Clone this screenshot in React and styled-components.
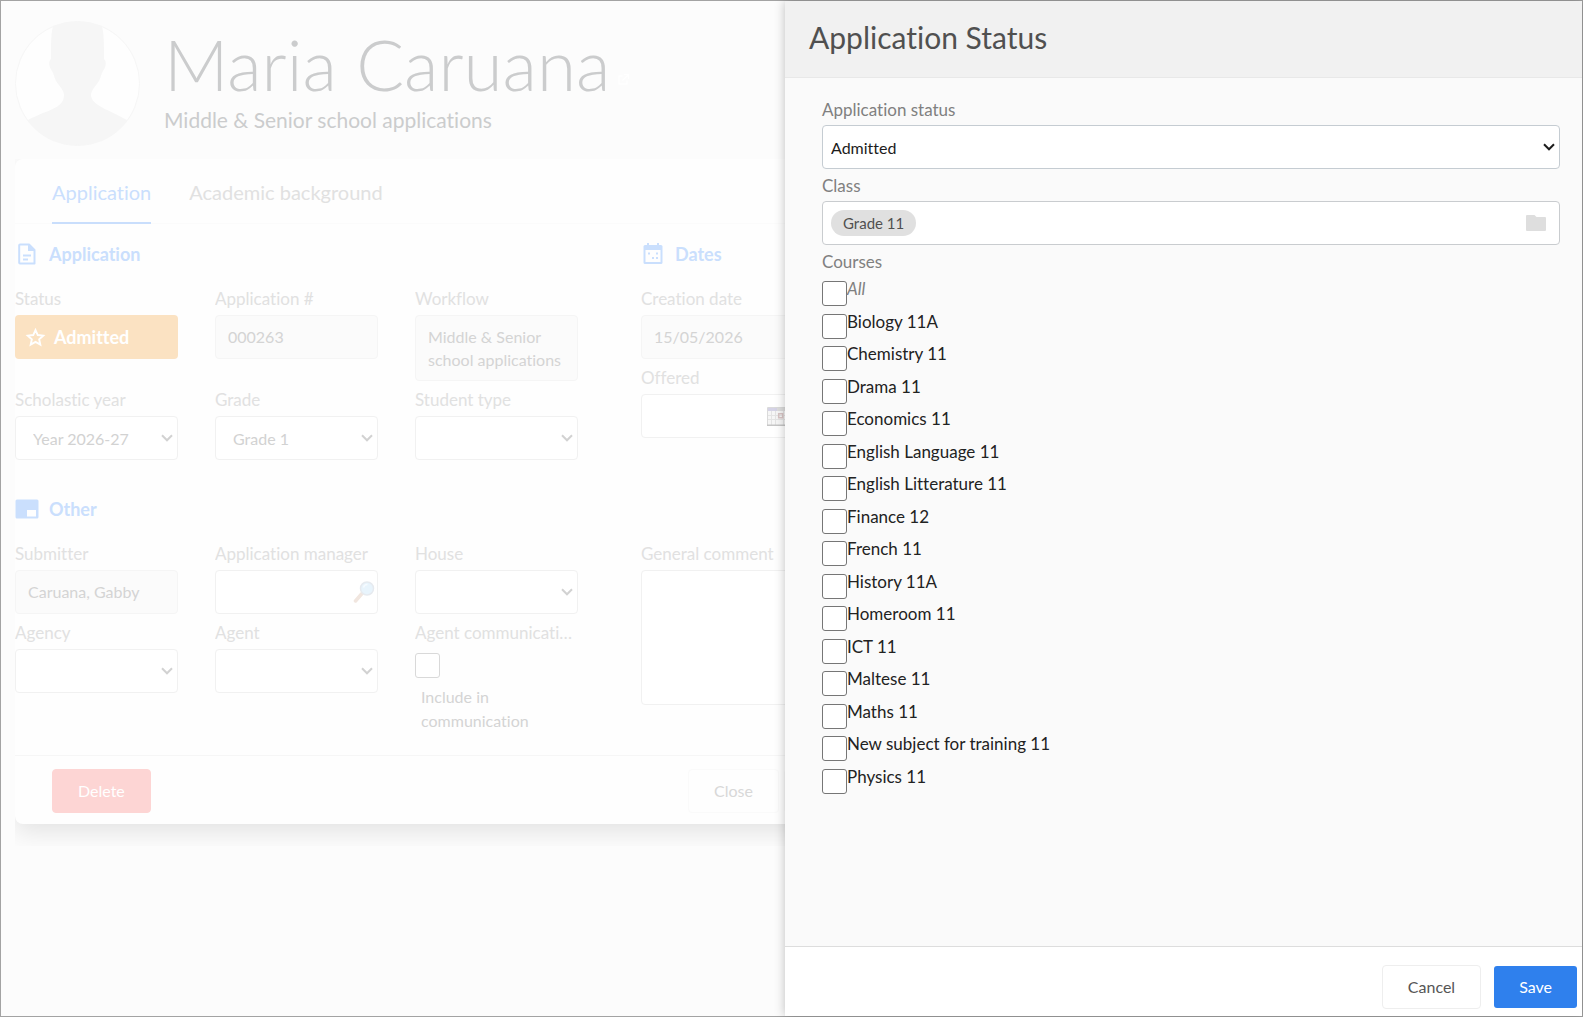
import React from 'react';
import styled, { createGlobalStyle } from 'styled-components';

const GlobalStyle = createGlobalStyle`
  * {
    box-sizing: border-box;
  }
  body {
    margin: 0;
    font-family: Lato, 'Open Sans', sans-serif;
    font-size: 16px;
    font-variant-ligatures: none;
    background: #fcfcfc;
  }
  button,
  input,
  select,
  textarea {
    font-family: inherit;
    font-size: 16px;
    font-variant-ligatures: none;
    margin: 0;
  }
`;

const Shell = styled.div`
  display: grid;
  grid-template-columns: minmax(0, 784fr) minmax(0, 797fr);
  min-height: 100vh;
  border: 1px solid #a3a3a3;
`;

const Record = styled.main`
  overflow: hidden;
  padding: 20px 0 0 14px;
  background: #fcfcfc;
`;

const Profile = styled.header`
  display: flex;
  gap: 24px;
  height: 138px;
`;

const Avatar = styled.svg`
  flex: none;
  width: 125px;
  height: 125px;
`;

const Name = styled.h1`
  display: flex;
  align-items: center;
  gap: 8px;
  margin: 0;
  font-size: 71px;
  font-weight: 300;
  line-height: 85px;
  color: #cbcccd;
  svg {
    margin-top: 32px;
    color: #ffffff;
  }
`;

const Workflow = styled.p`
  margin: 0;
  font-size: 21px;
  line-height: 28px;
  color: #cbcccd;
`;

const Card = styled.section`
  margin-right: -84px;
  border-radius: 8px;
  background: #fefefe;
  box-shadow: 0 8px 24px rgba(0, 0, 0, 0.1);
  clip-path: inset(0 0 -22px 0);
`;

const TabList = styled.nav`
  display: flex;
  gap: 38px;
  height: 65px;
  padding-left: 37px;
  border-bottom: 1px solid #fbfbfb;
`;

const Tab = styled.a`
  height: 65px;
  padding-top: 20px;
  border-bottom: 2px solid ${({ $active }) => ($active ? '#c9defc' : 'transparent')};
  font-size: 20px;
  line-height: 26px;
  text-decoration: none;
  color: ${({ $active }) => ($active ? '#cadffd' : '#e1e1e1')};
`;

const Sections = styled.form`
  display: grid;
  grid-template-columns: minmax(0, 563fr) minmax(0, 228fr);
  gap: 19px 63px;
  padding-bottom: 22px;
`;

const SectionTitle = styled.h2`
  display: flex;
  align-items: center;
  gap: 10px;
  margin: 0;
  padding: 17px 0 13px;
  font-size: 18px;
  font-weight: 700;
  line-height: 26px;
  color: #cadffd;
`;

const Fields = styled.div`
  display: grid;
  grid-template-columns: repeat(${({ $columns }) => $columns}, minmax(0, 1fr));
  column-gap: 37px;
  padding-right: ${({ $inset }) => ($inset ? '65px' : '0')};
`;

const FieldBox = styled.div`
  min-width: 0;
`;

const Label = styled.label`
  display: block;
  overflow: hidden;
  padding: 6px 0 3px;
  font-size: 17px;
  line-height: 26px;
  white-space: nowrap;
  text-overflow: ellipsis;
  color: #e1e1e1;
`;

const ReadOnly = styled.output`
  display: block;
  min-height: 44px;
  padding: 9px 12px;
  border: 1px solid #f5f5f5;
  border-radius: 4px;
  line-height: 23px;
  background: #fbfbfb;
  color: #d4d4d4;
`;

const StatusBadge = styled.output`
  display: flex;
  align-items: center;
  gap: 8px;
  height: 44px;
  padding: 0 10px;
  border-radius: 4px;
  font-size: 18px;
  font-weight: 700;
  background: #fbe2c2;
  color: #ffffff;
`;

const SelectBox = styled.div`
  display: grid;
  align-items: center;
  color: ${({ $strong }) => ($strong ? '#1c1c1c' : '#d2d2d2')};
  > * {
    grid-area: 1 / 1;
  }
  svg {
    justify-self: end;
    margin-right: 5px;
    pointer-events: none;
  }
`;

const Select = styled.select`
  appearance: none;
  width: 100%;
  height: 44px;
  padding: 0 20px 0 ${({ $strong }) => ($strong ? '8px' : '17px')};
  border: 1px solid ${({ $strong }) => ($strong ? '#c5ccd2' : '#f1f1f1')};
  border-radius: 4px;
  background: #ffffff;
  color: inherit;
`;

const InputWrap = styled.div`
  display: flex;
  align-items: center;
  height: 44px;
  padding-right: ${({ $pad }) => $pad}px;
  border: 1px solid #f1f1f1;
  border-radius: 4px;
  background: #ffffff;
  svg {
    flex: none;
  }
`;

const Input = styled.input`
  flex: 1;
  min-width: 0;
  height: 100%;
  padding: 0 12px;
  border: 0;
  background: transparent;
  color: #d4d4d4;
`;

const Textarea = styled.textarea`
  display: block;
  width: 100%;
  height: 135px;
  border: 1px solid #f1f1f1;
  border-radius: 4px;
  background: #ffffff;
  resize: none;
`;

const Checkbox = styled.input`
  flex: none;
  appearance: none;
  display: block;
  width: 25px;
  height: 25px;
  border: 1px solid ${({ $faded }) => ($faded ? '#d9d9d9' : '#767676')};
  border-radius: 3px;
  background: #ffffff;
`;

const Include = styled.label`
  display: block;
  padding-top: 4px;
  color: #d4d4d4;
  line-height: 24px;
  span {
    display: block;
    padding: 7px 0 0 6px;
  }
`;

const CardFooter = styled.footer`
  display: flex;
  gap: 5px;
  padding: 13px 0 11px 37px;
  border-top: 1px solid #f6f6f6;
`;

const buttonColors = {
  danger: ['#fdd5d4', '#fdd5d4', '#ffffff'],
  faded: ['#fefefe', '#fafafa', '#d8d8d8'],
  plain: ['#ffffff', '#eeeeee', '#555555'],
};

const Button = styled.button`
  height: 44px;
  padding: 0 25px 1px;
  border: 1px solid ${({ $kind }) => buttonColors[$kind][1]};
  border-radius: 4px;
  background: ${({ $kind }) => buttonColors[$kind][0]};
  color: ${({ $kind }) => buttonColors[$kind][2]};
`;

const DeleteButton = styled(Button)`
  margin-right: auto;
`;

const SubmitButton = styled(Button)`
  width: 85px;
`;

const SaveButton = styled.button`
  height: 42px;
  padding: 0 25px 1px;
  border: 0;
  border-radius: 3px;
  background: #2f80ed;
  color: #ffffff;
`;

const Drawer = styled.aside`
  position: relative;
  display: flex;
  flex-direction: column;
  background: #fafafa;
  box-shadow: 0 0 10px rgba(0, 0, 0, 0.25);
`;

const DrawerHeader = styled.header`
  height: 77px;
  padding: 16px 24px 0;
  border-bottom: 1px solid #e8e8e8;
  background: #f1f1f1;
  h2 {
    margin: 0;
    font-size: 30px;
    font-weight: 400;
    line-height: 40px;
    color: #505050;
  }
`;

const DrawerBody = styled.form`
  flex: 1;
  padding: 15px 22px 0 37px;
`;

const DrawerLabel = styled.label`
  display: block;
  padding: 4px 0 2px;
  font-size: 17px;
  line-height: 26px;
  color: #808080;
`;

const ClassPicker = styled.div`
  display: flex;
  align-items: center;
  justify-content: space-between;
  height: 44px;
  padding: 0 13px 0 8px;
  border: 1px solid #c9cccf;
  border-radius: 4px;
  background: #ffffff;
`;

const Chip = styled.span`
  padding: 0 12px;
  border-radius: 13px;
  font-size: 15px;
  line-height: 26px;
  background: #e0e0e0;
  color: #505050;
`;

const IconButton = styled.button`
  display: flex;
  padding: 0;
  border: 0;
  background: transparent;
  color: #dedede;
`;

const Courses = styled.fieldset`
  margin: 0;
  padding: 0;
  border: 0;
  legend {
    padding: 4px 0 2px;
    font-size: 17px;
    line-height: 26px;
    color: #808080;
  }
`;

const CourseList = styled.div`
  display: grid;
  grid-auto-rows: 1fr;
  height: 520px;
`;

const Course = styled.label`
  display: flex;
  align-items: flex-start;
  padding-top: 4px;
  font-size: 17px;
  line-height: 16px;
  font-style: ${({ $all }) => ($all ? 'italic' : 'normal')};
  color: ${({ $all }) => ($all ? '#808080' : '#222222')};
`;

const DrawerFooter = styled.footer`
  display: flex;
  align-items: center;
  justify-content: flex-end;
  gap: 13px;
  padding: 18px 5px 7px;
  border-top: 1px solid #dddddd;
  background: #ffffff;
`;

const courses = [
  'Biology 11A',
  'Chemistry 11',
  'Drama 11',
  'Economics 11',
  'English Language 11',
  'English Litterature 11',
  'Finance 12',
  'French 11',
  'History 11A',
  'Homeroom 11',
  'ICT 11',
  'Maltese 11',
  'Maths 11',
  'New subject for training 11',
  'Physics 11',
];

const DocumentIcon = () => (
  <svg width="24" height="24" viewBox="0 0 24 24" fill="none">
    <path
      d="M5 2.500h9l5.500 5.500v13.500H5a.8.8 0 0 1-.8-.8V3.300a.8.8 0 0 1 .8-.8z"
      stroke="currentColor"
      strokeWidth="2"
      strokeLinejoin="round"
    />
    <path d="M13 2.500V9h7z" fill="currentColor" />
    <path d="M8 13.500h8M8 17.500h5" stroke="currentColor" strokeWidth="2" />
  </svg>
);

const CalendarIcon = () => (
  <svg width="24" height="24" viewBox="0 0 24 24">
    <path
      fill="currentColor"
      fillRule="evenodd"
      d="M6 1h2v2h8V1h2v2h2a1.500 1.500 0 0 1 1.500 1.500v16A1.500 1.500 0 0 1 20 22H4a1.500 1.500 0 0 1-1.500-1.500v-16A1.500 1.500 0 0 1 4 3h2zM4.500 8v12h15V8z"
    />
    <path
      fill="currentColor"
      d="M7 10.500h2v2H7zM15 10.500h2v2h-2zM11 15h2v2h-2zM15 15h2v2h-2z"
    />
  </svg>
);

const OtherIcon = () => (
  <svg width="24" height="24" viewBox="0 0 24 24">
    <path
      fill="currentColor"
      fillRule="evenodd"
      d="M2 2.500h20A1.500 1.500 0 0 1 23.500 4v16a1.500 1.500 0 0 1-1.500 1.500H2A1.500 1.500 0 0 1 .5 20V4A1.500 1.500 0 0 1 2 2.500zM12 13v6.500h9V13z"
    />
  </svg>
);

const StarIcon = () => (
  <svg width="21" height="21" viewBox="0 0 24 24" fill="none">
    <path
      d="M12 3.500l2.600 5.700 6.200.7-4.600 4.200 1.300 6.100-5.500-3.100-5.500 3.100 1.300-6.100-4.600-4.200 6.200-.7z"
      stroke="currentColor"
      strokeWidth="2.200"
    />
  </svg>
);

const ChevronIcon = () => (
  <svg width="12" height="8" viewBox="0 0 12 8" fill="none">
    <path d="M1 1.300l5 5 5-5" stroke="currentColor" strokeWidth="2" />
  </svg>
);

const SearchIcon = () => (
  <svg width="22" height="22" viewBox="0 0 22 22">
    <path d="M2.500 20L9 12.500" stroke="#f1e6df" strokeWidth="3.500" strokeLinecap="round" />
    <circle cx="14" cy="7.500" r="6.500" fill="#e8f4fc" stroke="#e6eaef" strokeWidth="1.500" />
    <path d="M10.500 6.500a4 4 0 0 1 4-3" stroke="#f6fbff" strokeWidth="1.500" fill="none" />
  </svg>
);

const DatePickerIcon = () => (
  <svg width="28" height="19" viewBox="0 0 28 19">
    <path fill="#f6f6f6" stroke="#dadada" d="M.5.5h27v18H.5z" />
    <path fill="#d5d3e6" d="M1 1h9v3H1z" />
    <path fill="#dddddd" d="M10 1h17v3H10z" />
    <path d="M1 8.500h26M1 12.500h26M4.500 4v14M8.500 4v14M16.500 4v14M20.500 4v14" stroke="#e4e4e4" />
    <path fill="none" stroke="#d8c5c5" strokeWidth="1.500" d="M11.700 6.700h4v4h-4z" />
    <path fill="#c6c6c6" d="M0 17.500h28V19H0z" />
  </svg>
);

const LinkIcon = () => (
  <svg width="11" height="11" viewBox="0 0 11 11" fill="none" stroke="currentColor">
    <path d="M4.500 2H1v8h8V6.500M6 .5h4.500V5M10.500.5L4.500 6.500" strokeWidth="1.200" />
  </svg>
);

const FolderIcon = () => (
  <svg width="20" height="17" viewBox="0 0 20 17">
    <path
      fill="currentColor"
      d="M1 0h7.500l2 2H19a1 1 0 0 1 1 1v12a1 1 0 0 1-1 1H1a1 1 0 0 1-1-1V1a1 1 0 0 1 1-1z"
    />
  </svg>
);

const Field = ({ label, id, children }) => (
  <FieldBox>
    <Label htmlFor={id}>{label}</Label>
    {children}
  </FieldBox>
);

const SelectControl = ({ id, value, strong }) => (
  <SelectBox $strong={strong}>
    <Select id={id} defaultValue={value} $strong={strong}>
      <option value={value}>{value}</option>
    </Select>
    <ChevronIcon />
  </SelectBox>
);

const SelectField = ({ label, id, value }) => (
  <Field label={label} id={id}>
    <SelectControl id={id} value={value} />
  </Field>
);

const ApplicationRecord = () => (
  <Record>
    <Profile>
      <Avatar viewBox="0 0 125 125">
        <clipPath id="face">
          <circle cx="62.500" cy="62.500" r="62" />
        </clipPath>
        <circle cx="62.500" cy="62.500" r="62" fill="#fefefe" />
        <path
          clipPath="url(#face)"
          fill="#f6f6f6"
          d="M40 0C36 8 36 18 36 38c-3 3-2 8 1 12 2 3 2 6 4 10 3 5 8 9 8 14 0 14-18 15-36 25v30h99V99c-18-10-36-15-36-25 0-5 5-9 8-14 2-4 2-7 4-10 3-4 4-9 1-12 0-20 0-30-4-38z"
        />
        <circle cx="62.500" cy="62.500" r="62" fill="none" stroke="#f6f6f6" />
      </Avatar>
      <div>
        <Name>
          Maria Caruana
          <LinkIcon />
        </Name>
        <Workflow>Middle &amp; Senior school applications</Workflow>
      </div>
    </Profile>
    <Card>
      <TabList>
        <Tab href="#application" $active>
          Application
        </Tab>
        <Tab href="#academic">Academic background</Tab>
      </TabList>
      <Sections>
        <div>
          <SectionTitle>
            <DocumentIcon />
            Application
          </SectionTitle>
          <Fields $columns={3}>
            <Field label="Status" id="status">
              <StatusBadge id="status">
                <StarIcon />
                Admitted
              </StatusBadge>
            </Field>
            <Field label="Application #" id="number">
              <ReadOnly id="number">000263</ReadOnly>
            </Field>
            <Field label="Workflow" id="workflow">
              <ReadOnly id="workflow">Middle &amp; Senior school applications</ReadOnly>
            </Field>
            <SelectField label="Scholastic year" id="year" value="Year 2026-27" />
            <SelectField label="Grade" id="grade" value="Grade 1" />
            <SelectField label="Student type" id="type" value="" />
          </Fields>
        </div>
        <div>
          <SectionTitle>
            <CalendarIcon />
            Dates
          </SectionTitle>
          <Fields $columns={1} $inset>
            <Field label="Creation date" id="created">
              <ReadOnly id="created">15/05/2026</ReadOnly>
            </Field>
            <Field label="Offered" id="offered">
              <InputWrap $pad={8}>
                <Input id="offered" type="text" />
                <DatePickerIcon />
              </InputWrap>
            </Field>
          </Fields>
        </div>
        <div>
          <SectionTitle>
            <OtherIcon />
            Other
          </SectionTitle>
          <Fields $columns={3}>
            <Field label="Submitter" id="submitter">
              <ReadOnly id="submitter">Caruana, Gabby</ReadOnly>
            </Field>
            <Field label="Application manager" id="manager">
              <InputWrap $pad={2}>
                <Input id="manager" type="text" />
                <SearchIcon />
              </InputWrap>
            </Field>
            <SelectField label="House" id="house" value="" />
            <SelectField label="Agency" id="agency" value="" />
            <SelectField label="Agent" id="agent" value="" />
            <Field label="Agent communication" id="include">
              <Include>
                <Checkbox id="include" type="checkbox" $faded />
                <span>Include in communication</span>
              </Include>
            </Field>
          </Fields>
        </div>
        <div>
          <SectionTitle>&nbsp;</SectionTitle>
          <Field label="General comment" id="comment">
            <Textarea id="comment" />
          </Field>
        </div>
      </Sections>
      <CardFooter>
        <DeleteButton type="button" $kind="danger">
          Delete
        </DeleteButton>
        <Button type="button" $kind="faded">
          Close
        </Button>
        <SubmitButton type="button" $kind="faded" aria-label="Save application" />
      </CardFooter>
    </Card>
  </Record>
);

const StatusDrawer = () => (
  <Drawer>
    <DrawerHeader>
      <h2>Application Status</h2>
    </DrawerHeader>
    <DrawerBody>
      <DrawerLabel htmlFor="new-status">Application status</DrawerLabel>
      <SelectControl id="new-status" value="Admitted" strong />
      <DrawerLabel htmlFor="class">Class</DrawerLabel>
      <ClassPicker>
        <Chip>Grade 11</Chip>
        <IconButton id="class" type="button" aria-label="Choose class">
          <FolderIcon />
        </IconButton>
      </ClassPicker>
      <Courses>
        <legend>Courses</legend>
        <CourseList>
          <Course $all>
            <Checkbox type="checkbox" />
            All
          </Course>
          {courses.map((course) => (
            <Course key={course}>
              <Checkbox type="checkbox" />
              {course}
            </Course>
          ))}
        </CourseList>
      </Courses>
    </DrawerBody>
    <DrawerFooter>
      <Button type="button" $kind="plain">
        Cancel
      </Button>
      <SaveButton type="button">Save</SaveButton>
    </DrawerFooter>
  </Drawer>
);

export default () => (
  <>
    <GlobalStyle />
    <Shell>
      <ApplicationRecord />
      <StatusDrawer />
    </Shell>
  </>
);
